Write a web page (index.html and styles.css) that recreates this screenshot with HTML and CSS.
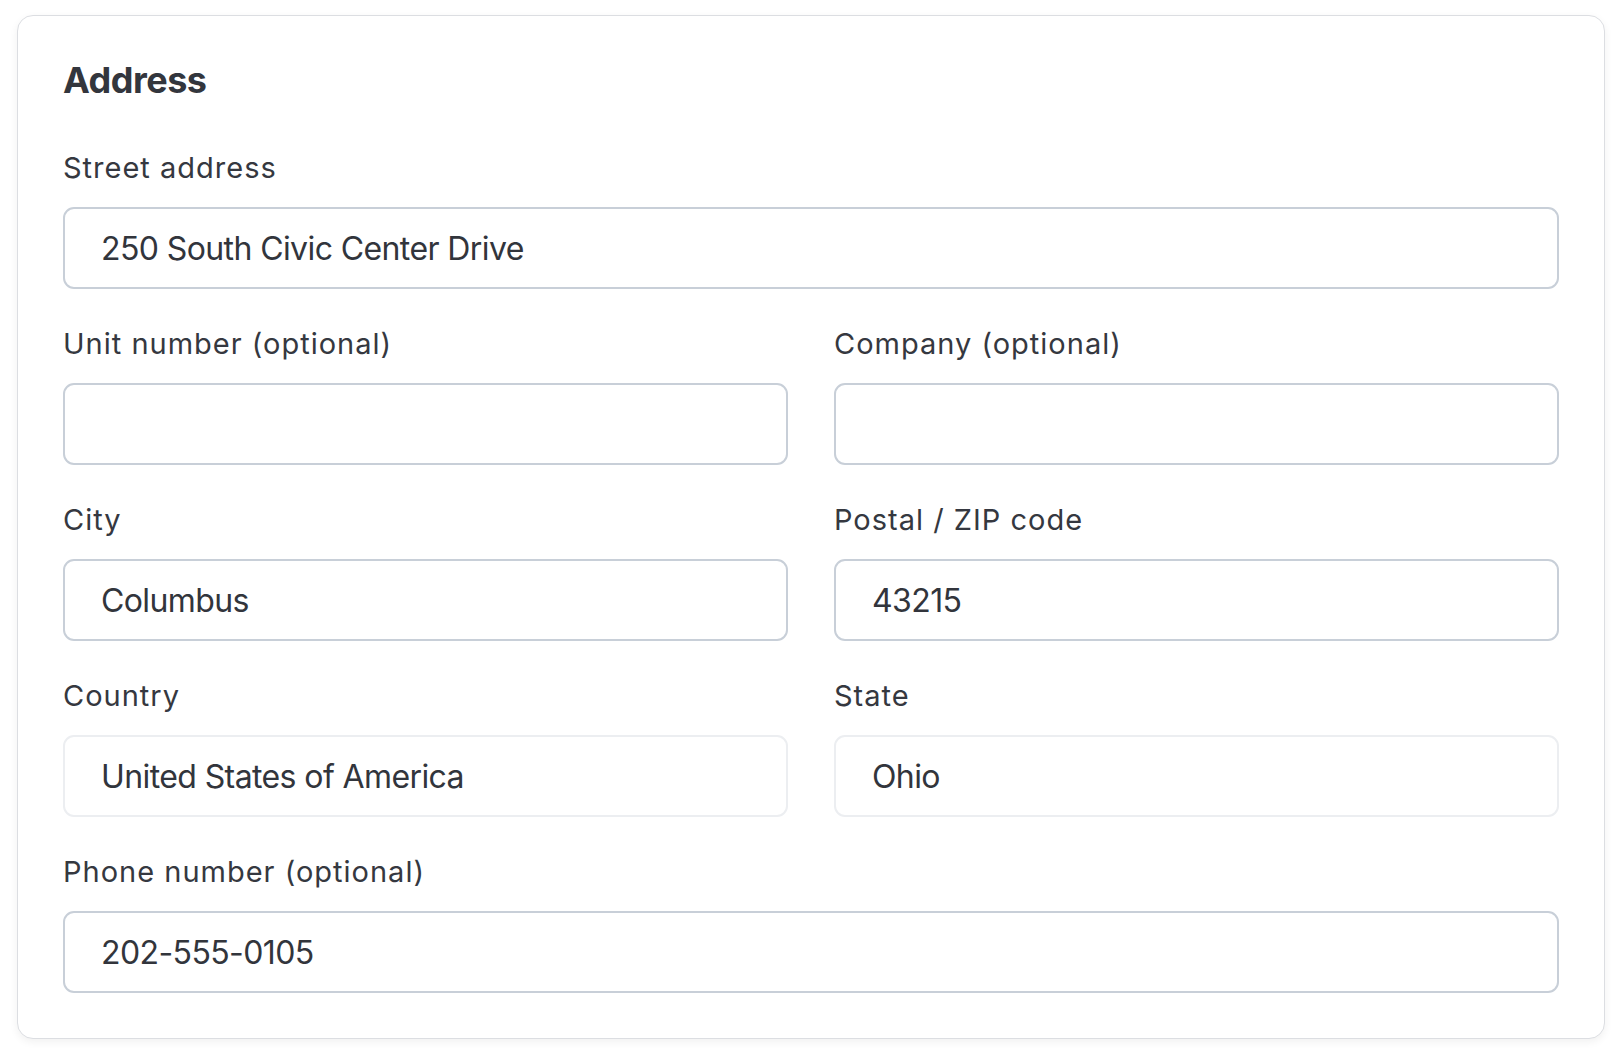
FILE: index.html
```html
<!DOCTYPE html>
<html>
<head>
  <link rel="stylesheet" href="styles.css">
</head>
<body>

  <div class="card">
    <h2>Address</h2>

    <div class="form-group">
      <label for="street">Street address</label>
      <input type="text" id="street" value="250 South Civic Center Drive">
    </div>

    <div class="form-row">
      <div class="form-group">
        <label for="unit">Unit number (optional)</label>
        <input type="text" id="unit">
      </div>
      <div class="form-group">
        <label for="company">Company (optional)</label>
        <input type="text" id="company">
      </div>
    </div>

    <div class="form-row">
      <div class="form-group">
        <label for="city">City</label>
        <input type="text" id="city" value="Columbus">
      </div>
      <div class="form-group">
        <label for="zip">Postal / ZIP code</label>
        <input type="text" id="zip" value="43215">
      </div>
    </div>

    <div class="form-row">
      <div class="form-group">
        <label for="country">Country</label>
        <input type="text" id="country" class="readonly" value="United States of America" readonly>
      </div>
      <div class="form-group">
        <label for="state">State</label>
        <input type="text" id="state" class="readonly" value="Ohio" readonly>
      </div>
    </div>

    <div class="form-group">
      <label for="phone">Phone number (optional)</label>
      <input type="text" id="phone" value="202-555-0105">
    </div>
  </div>

</body>
</html>
```

FILE: styles.css
```css
body {
  margin: 0;
  padding: 15px 17px;
  font-family: Inter, "Noto Sans", sans-serif;
  background: #fff;
  color: #343840;
}

.card {
  border: 1px solid #dcdee2;
  border-radius: 16px;
  box-shadow: 0 3px 8px rgba(0, 0, 0, 0.06);
  padding: 46px 45px 45px;
  background: #fff;
}

h2 {
  margin: 0 0 50px;
  font-size: 36px;
  line-height: 36px;
  font-weight: 700;
  letter-spacing: -0.5px;
  color: #33363d;
}

.form-row {
  display: grid;
  grid-template-columns: 1fr 1fr;
  column-gap: 46px;
}

.form-group {
  margin-bottom: 35px;
}

.card > .form-group:last-child {
  margin-bottom: 0;
}

.form-group label {
  display: block;
  font-size: 29px;
  line-height: 40px;
  letter-spacing: 1px;
  margin-bottom: 19px;
  color: #353840;
}

.form-group input {
  display: block;
  box-sizing: border-box;
  width: 100%;
  height: 82px;
  padding: 0 36px;
  border: 2px solid #c8cfd8;
  border-radius: 11px;
  font-family: Inter, "Noto Sans", sans-serif;
  font-size: 32px;
  letter-spacing: -0.6px;
  color: #32353c;
  background: #fff;
  outline: none;
}

.form-group input.readonly {
  border-color: #eceef1;
}
```
